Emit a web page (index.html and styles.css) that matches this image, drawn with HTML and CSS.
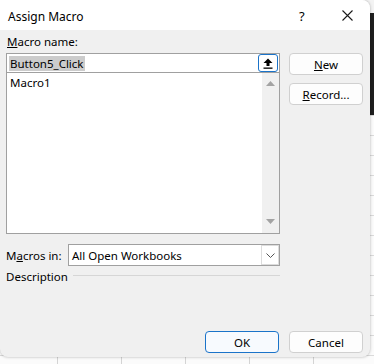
FILE: index.html
```html
<!DOCTYPE html>
<html>
<head>
  <title>Assign Macro</title>
  <link rel="stylesheet" href="styles.css">
</head>
<body>

  <div class="dialog">
    <div class="titlebar">
      <span class="title">Assign Macro</span>
      <span class="help">?</span>
      <span class="close">
        <svg width="11" height="11" viewBox="0 0 11 11"><path d="M0.5 0.5 L10.5 10.5 M10.5 0.5 L0.5 10.5" stroke="#1a1a1a" stroke-width="1.1" fill="none"/></svg>
      </span>
    </div>

    <div class="content">
      <div class="main">
        <div class="left">
          <div class="label"><u>M</u>acro name:</div>
          <div class="namebox">
            <span class="selected">Button5_Click</span>
            <span class="refbtn">
              <svg width="10" height="11" viewBox="0 0 10 11"><path d="M5 0.5 L9.5 5 L6.5 5 L6.5 8 L3.5 8 L3.5 5 L0.5 5 Z" fill="#000"/><rect x="0.5" y="9.5" width="9" height="1.3" fill="#000"/></svg>
            </span>
          </div>
          <div class="list">
            <div class="items">
              <div class="item">Macro1</div>
            </div>
            <div class="scroll">
              <svg width="9" height="5" viewBox="0 0 9 5"><path d="M4.5 0 L9 5 L0 5 Z" fill="#a3a3a3"/></svg>
              <svg width="9" height="5" viewBox="0 0 9 5"><path d="M0 0 L9 0 L4.5 5 Z" fill="#a3a3a3"/></svg>
            </div>
          </div>
        </div>
        <div class="side">
          <button class="btn"><u>N</u>ew</button>
          <button class="btn"><u>R</u>ecord...</button>
        </div>
      </div>

      <div class="row">
        <div class="rowlabel">M<u>a</u>cros in:</div>
        <div class="select">
          <span class="value">All Open Workbooks</span>
          <span class="drop">
            <svg width="9" height="5" viewBox="0 0 9 5"><path d="M0.5 0.5 L4.5 4.5 L8.5 0.5" stroke="#555" stroke-width="1" fill="none"/></svg>
          </span>
        </div>
      </div>

      <div class="desc">
        <span class="desctext">Description</span>
        <span class="rule"></span>
      </div>

      <div class="footer">
        <button class="btn ok">OK</button>
        <button class="btn">Cancel</button>
      </div>
    </div>
  </div>

</body>
</html>
```

FILE: styles.css
```css
body {
  margin: 0;
  width: 374px;
  height: 364px;
  overflow: hidden;
  font-family: "Noto Sans", "Open Sans", sans-serif;
  font-size: 11.5px;
  color: #000;
  background:
    linear-gradient(to bottom, #f3f3f3 0 13px, #1f1f1f 13px 115px, transparent 115px),
    repeating-linear-gradient(to right, transparent 0 57px, #d4d4d4 57px 58px, transparent 58px 64px),
    repeating-linear-gradient(to bottom, transparent 0 15px, #dadada 15px 16px, transparent 16px 20px),
    #fbfbfb;
}

.dialog {
  width: 370px;
  height: 357px;
  background: #f0f0f0;
  border-radius: 0 8px 8px 8px;
  overflow: hidden;
  display: flex;
  flex-direction: column;
  box-shadow: 0 0 3px rgba(0, 0, 0, 0.3);
}

/* title bar */
.titlebar {
  height: 30px;
  background: #fff;
  display: flex;
  align-items: center;
  padding: 0 0 0 8px;
  flex-shrink: 0;
  font-size: 12px;
}

.title {
  flex: 1;
  padding-top: 2px;
}

.help {
  width: 12px;
  margin-right: 31px;
  padding-top: 2px;
  font-size: 13px;
}

.close {
  display: flex;
  margin-right: 17px;
  padding-top: 1px;
}

/* body */
.content {
  flex: 1;
  display: flex;
  flex-direction: column;
  padding: 4px 7px 4px 6px;
}

.main {
  display: flex;
}

.left {
  width: 274px;
}

.label {
  height: 16px;
  line-height: 16px;
  margin-bottom: 3px;
  padding-left: 1px;
}

.namebox {
  height: 18px;
  border: 1px solid #a0a0a0;
  background: #fff;
  display: flex;
  align-items: center;
  padding-left: 2px;
}

.selected {
  background: #cccccc;
  line-height: 15px;
  padding: 0 1px;
}

.refbtn {
  margin-left: auto;
  margin-right: 1px;
  width: 18px;
  height: 16px;
  border: 1px solid #1a73c9;
  border-radius: 3px;
  display: flex;
  align-items: center;
  justify-content: center;
  background: #fff;
}

.list {
  height: 160px;
  border: 1px solid #a0a0a0;
  border-top: none;
  background: #fff;
  display: flex;
}

.items {
  flex: 1;
  padding: 2px 3px;
}

.item {
  line-height: 15px;
}

.scroll {
  width: 17px;
  background: #f0f0f0;
  display: flex;
  flex-direction: column;
  align-items: center;
  justify-content: space-between;
  padding: 8px 0 9px;
}

.side {
  margin-left: 9px;
  padding-top: 19px;
  display: flex;
  flex-direction: column;
  gap: 8px;
}

.btn {
  width: 74px;
  height: 22px;
  font-family: inherit;
  font-size: 11.5px;
  color: #000;
  background: #fdfdfd;
  border: 1px solid #d0d0d0;
  border-radius: 4px;
  padding: 0;
}

.btn u {
  text-decoration-thickness: 1px;
}

/* macros in */
.row {
  display: flex;
  align-items: center;
  margin-top: 10px;
}

.rowlabel {
  width: 62px;
}

.select {
  width: 210px;
  height: 20px;
  border: 1px solid #a0a0a0;
  background: #fff;
  display: flex;
  align-items: center;
}

.value {
  flex: 1;
  padding-left: 3px;
}

.drop {
  width: 16px;
  height: 18px;
  border: 1px solid #dcdcdc;
  display: flex;
  align-items: center;
  justify-content: center;
}

.desc {
  width: 274px;
  display: flex;
  align-items: center;
  gap: 5px;
  height: 16px;
  margin-top: 2px;
}

.rule {
  flex: 1;
  height: 1px;
  background: #d6d6d6;
  margin-top: -2px;
}

.footer {
  margin-top: auto;
  display: flex;
  justify-content: flex-end;
  gap: 10px;
}

.ok {
  border-color: #1a73c9;
  background: #f7fafe;
}
```
